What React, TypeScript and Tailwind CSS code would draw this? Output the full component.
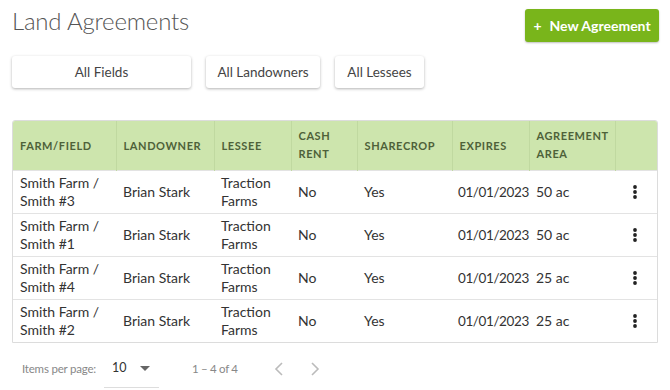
import React from "react";

const rows = [
  { f1: "Smith Farm /", f2: "Smith #3", area: "50 ac" },
  { f1: "Smith Farm /", f2: "Smith #1", area: "50 ac" },
  { f1: "Smith Farm /", f2: "Smith #4", area: "25 ac" },
  { f1: "Smith Farm /", f2: "Smith #2", area: "25 ac" },
];

const cols = [103, 98, 77, 66, 95, 77, 86, 42];

function Kebab() {
  return (
    <svg width="4" height="14" viewBox="0 0 4 14">
      <circle cx="2" cy="2" r="1.9" fill="#222" />
      <circle cx="2" cy="7" r="1.9" fill="#222" />
      <circle cx="2" cy="12" r="1.9" fill="#222" />
    </svg>
  );
}

export default function App() {
  return (
    <div
      className="w-[670px] h-[390px] bg-white overflow-hidden text-[#333]"
      style={{ fontFamily: "Lato, 'Open Sans', sans-serif" }}
    >
      <div className="flex items-start justify-between pl-[12px] pr-[11px] pt-[6px]">
        <h1 className="text-[24px] font-light text-[#555] leading-[30px] tracking-[-0.2px]">Land Agreements</h1>
        <button className="mt-[3px] h-[33px] w-[134px] rounded-[3px] bg-[#79b51b] text-white text-[14px] font-bold shadow-[0_1px_2px_rgba(0,0,0,0.25)] flex items-center justify-center gap-[8px]">
          <span>+</span>
          <span>New Agreement</span>
        </button>
      </div>

      <div className="flex gap-[15px] pl-[12px] mt-[14px]">
        <button className="h-[32px] w-[179px] rounded-[3px] bg-white text-[13.5px] text-[#444] shadow-[0_1px_3px_rgba(0,0,0,0.3)]">All Fields</button>
        <button className="h-[32px] w-[114px] rounded-[3px] bg-white text-[13.5px] text-[#444] shadow-[0_1px_3px_rgba(0,0,0,0.3)]">All Landowners</button>
        <button className="h-[32px] w-[89px] rounded-[3px] bg-white text-[13.5px] text-[#444] shadow-[0_1px_3px_rgba(0,0,0,0.3)]">All Lessees</button>
      </div>

      <div className="ml-[12px] mt-[32px] w-[646px] border border-[#dcdcdc] rounded-t-[3px] overflow-hidden">
        <table className="w-full border-collapse table-fixed">
          <colgroup>
            {cols.map((w, i) => (
              <col key={i} style={{ width: w }} />
            ))}
          </colgroup>
          <thead>
            <tr className="bg-[#cde5ad] h-[49px] text-[11px] font-bold tracking-[0.6px] text-[#4e6139] text-left">
              <th className="px-[7px] pt-[1px] border-r border-[#c0d9a0] font-bold">FARM/FIELD</th>
              <th className="px-[7px] pt-[1px] border-r border-[#c0d9a0] font-bold">LANDOWNER</th>
              <th className="px-[7px] pt-[1px] border-r border-[#c0d9a0] font-bold">LESSEE</th>
              <th className="px-[7px] border-r border-[#c0d9a0] font-bold leading-[18px]">CASH<br />RENT</th>
              <th className="px-[7px] pt-[1px] border-r border-[#c0d9a0] font-bold">SHARECROP</th>
              <th className="px-[7px] pt-[1px] border-r border-[#c0d9a0] font-bold">EXPIRES</th>
              <th className="px-[7px] border-r border-[#c0d9a0] font-bold leading-[18px]">AGREEMENT<br />AREA</th>
              <th></th>
            </tr>
          </thead>
          <tbody className="text-[14px] text-[#333] leading-[18px]">
            {rows.map((r, i) => (
              <tr key={i} className="h-[43px] border-t border-[#e3e3e3]">
                <td className="px-[7px]">{r.f1}<br />{r.f2}</td>
                <td className="px-[7px]">Brian Stark</td>
                <td className="px-[7px]">Traction<br />Farms</td>
                <td className="px-[7px]">No</td>
                <td className="px-[7px]">Yes</td>
                <td className="px-[6px] text-[13.5px] tracking-[-0.4px] whitespace-nowrap">01/01/2023</td>
                <td className="px-[7px]">{r.area}</td>
                <td className="px-[8px]">
                  <div className="flex justify-center pr-[2px]"><Kebab /></div>
                </td>
              </tr>
            ))}
          </tbody>
        </table>
      </div>

      <div className="flex items-center pl-[22px] mt-[7px] text-[11.5px] text-[#888] h-[38px]">
        <span className="tracking-[-0.2px]">Items per page:</span>
        <div className="ml-[8px] w-[55px] h-[38px] flex items-center justify-between pl-[8px] pr-[9px] border-b border-[#ddd] text-[#333] text-[12.5px]">
          <span>10</span>
          <svg width="10" height="5" viewBox="0 0 10 5"><path d="M0 0h10L5 5z" fill="#666" /></svg>
        </div>
        <span className="ml-[33px] tracking-[-0.3px]">1 – 4 of 4</span>
        <svg className="ml-[36px]" width="10" height="16" viewBox="0 0 10 16"><path d="M8 2 2 8l6 6" fill="none" stroke="#bbb" strokeWidth="1.6" /></svg>
        <svg className="ml-[26px]" width="10" height="16" viewBox="0 0 10 16"><path d="M2 2l6 6-6 6" fill="none" stroke="#bbb" strokeWidth="1.6" /></svg>
      </div>
    </div>
  );
}
